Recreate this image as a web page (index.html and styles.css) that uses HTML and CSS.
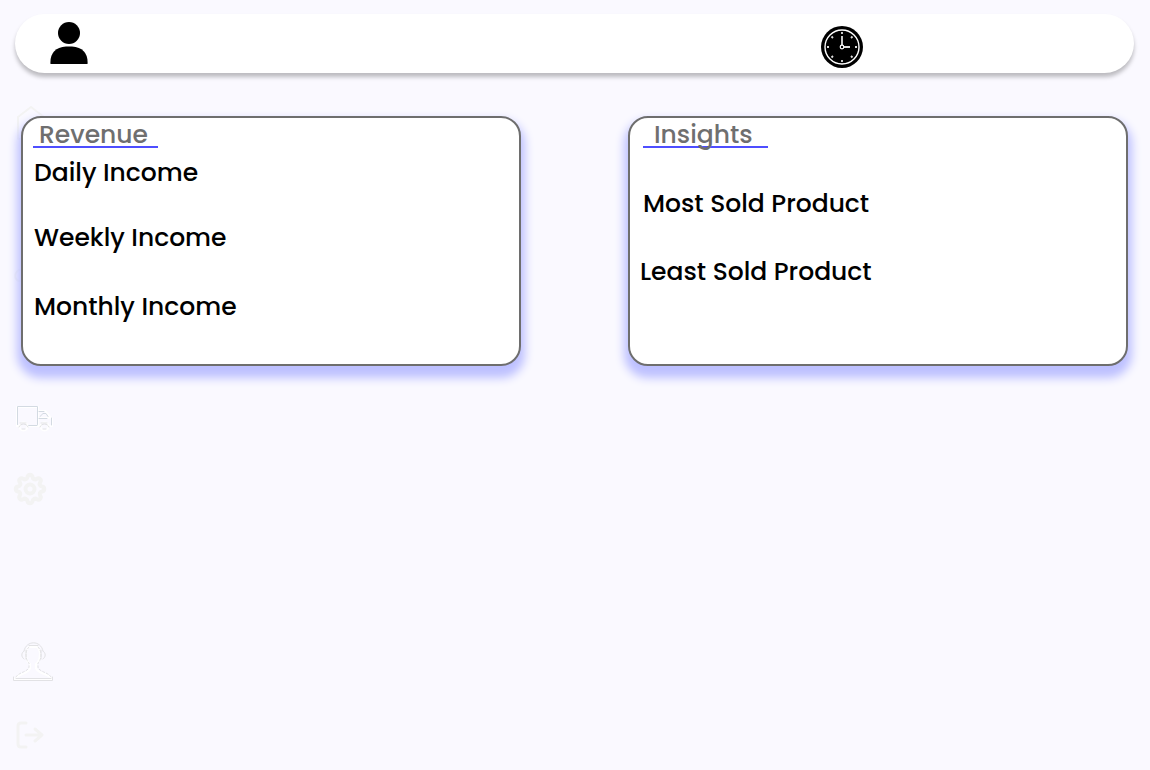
FILE: index.html
```html
<!DOCTYPE html>
<html lang="en">
<head>
<meta charset="utf-8">
<meta name="viewport" content="width=device-width, initial-scale=1">
<title>Dashboard</title>
<link rel="stylesheet" href="styles.css">
</head>
<body>
<nav class="sidebar" aria-label="Main">
  <a class="nav-link home" href="#home" aria-label="Home"><svg width="34" height="36" viewBox="0 0 34 36"><path d="M4 34V12L17 2l13 10v22z"/></svg></a>
  <a class="nav-link stock" href="#stock" aria-label="Stock"><svg width="32" height="24" viewBox="0 0 32 24"><path d="M5 1C0 4 0 10 5 12h20V1z"/></svg></a>
  <a class="nav-link delivery" href="#delivery" aria-label="Delivery"><svg width="40" height="26" viewBox="0 0 40 26"><path class="shine" d="M5 21H3V2h21v19H14M24 6h7l7 8v7h-2M26 21h-2M25 13h10"/><path class="steel" d="M3.500 19.500V1.500h20v18M13 20.500h10M25 6.500h5M26 11.500l3-3h3l2 3M25 13.500h8M37.500 13v7"/><circle class="shine" cx="9.500" cy="21.500" r="4"/><circle class="shine" cx="30.500" cy="21.500" r="4"/><path class="fine" d="M6 18h6M5 22c1-4 8-4 9 0M8 24h3M27 18h6M26 22c1-4 8-4 9 0M29 24h3"/></svg></a>
  <a class="nav-link settings" href="#settings" aria-label="Settings"><svg width="32" height="32" viewBox="0 0 32 32"><path class="bold" d="M13.500 4c.6-3 4.400-3 5 0 .4 2.200 2.300 3 4.200 1.800 2.500-1.700 5.200 1 3.500 3.500-1.200 1.900-.4 3.800 1.800 4.200 3 .6 3 4.400 0 5-2.200.4-3 2.300-1.800 4.200 1.700 2.500-1 5.200-3.500 3.500-1.900-1.200-3.800-.4-4.200 1.800-.6 3-4.400 3-5 0-.4-2.200-2.300-3-4.200-1.800-2.500 1.700-5.200-1-3.500-3.500C7 20.800 6.200 18.900 4 18.500c-3-.6-3-4.400 0-5 2.200-.4 3-2.300 1.800-4.200C4.100 6.800 6.800 4.100 9.300 5.800 11.200 7 13.100 6.200 13.500 4z"/><circle class="bold" cx="16" cy="16" r="4.500"/></svg></a>
  <a class="nav-link support" href="#support" aria-label="Support"><svg width="40" height="40" viewBox="0 0 40 40"><path class="shine" d="M1 37c2-5 14-5 15-11v-4c-5-4-5-14-1-17h8c4 3 4 13-1 17v4c1 6 14 6 16 11M1 37h37"/><path class="fine dots" d="M2 35c3-5 12-5 13-10v-4c-4-4-4-12 0-16M37 35c-3-5-12-5-13-10v-4c4-4 4-12 0-16"/><path class="fine" d="M-.5 35v3.500h39V35M2 36.500h35M10 9c2-11 17-11 19 0M15 3.500h9M10 9c-3 2-3 6 0 8M29 9c3 2 3 6 0 8M12 8v9M27 8v9"/></svg></a>
  <a class="nav-link logout" href="#logout" aria-label="Log out"><svg width="32" height="30" viewBox="0 0 32 30"><path class="bold" d="M12 3H7Q4 3 4 6v18q0 3 3 3h5M12 15h16M21 9l7 6-7 6"/></svg></a>
</nav>
<header class="topbar">
  <svg class="user" viewBox="0 0 38 44" role="img" aria-label="User"><circle cx="19" cy="12" r="11"/><path d="M.5 43q-1-16 15.500-17.500h6q16.500 1.500 15.500 17.500z"/></svg>
  <svg class="clock" viewBox="0 0 42 42" role="img" aria-label="Clock"><circle cx="21" cy="21" r="21"/><g fill="none" stroke="#fff"><circle cx="21" cy="21" r="17" stroke-width="1.400"/><path stroke="#ddd" stroke-width="1.800" d="M21 6v2M21 34v2M6 21h2M34 21h2M10.500 10.500l1.500 1.500M30 30l1.500 1.500M10.500 31.500l1.500-1.500M30 12l1.500-1.500"/><path stroke="#ddd" stroke-width="1.800" d="M21 19v-9M23 21h6"/><circle cx="21" cy="21" r="1.800" stroke-width="1.200"/></g></svg>
</header>
<main class="cards">
  <section class="card revenue">
    <h2 class="card-title">Revenue</h2>
    <p class="metric daily">Daily Income</p>
    <p class="metric weekly">Weekly Income</p>
    <p class="metric monthly">Monthly Income</p>
  </section>
  <section class="card insights">
    <h2 class="card-title">Insights</h2>
    <p class="metric most">Most Sold Product</p>
    <p class="metric least">Least Sold Product</p>
  </section>
</main>
</body>
</html>
```
FILE: styles.css
```css
* { box-sizing: border-box; }
body {
  margin: 0;
  min-height: 100vh;
  background: #faf9ff;
  color: #000;
  font-family: Poppins, Inter, "Open Sans", sans-serif;
}
/* The navigation rail sits underneath the cards. */
.sidebar {
  position: absolute;
  top: 105px;
  left: 14px;
  display: flex;
  flex-direction: column;
  align-items: flex-start;
}
.nav-link svg {
  display: block;
  overflow: visible;
  fill: none;
  stroke: #f3f3f3;
  stroke-width: 2;
  stroke-linecap: round;
  stroke-linejoin: round;
}
.nav-link .bold { stroke: #f3f3f3; stroke-width: 3; }
.settings .bold { stroke-width: 4; }
.nav-link .fine { stroke: #e2e2e5; stroke-width: 1; }
.nav-link .steel { stroke: #d3dae2; stroke-width: 1; }
.nav-link .shine { stroke: #fff; stroke-width: 2; }
.nav-link .dots { stroke-dasharray: 2 2; }
.stock { margin-top: 128px; }
.delivery { margin-top: 112px; }
.settings { margin-top: 42px; }
.support { margin-top: 137px; }
.logout { margin-top: 38px; }
.topbar {
  position: relative;
  display: flex;
  align-items: flex-start;
  justify-content: space-between;
  height: 59px;
  margin: 14px 16px 0 15px;
  padding: 7px 271px 0 35px;
  border-radius: 30px;
  background: #fff;
  box-shadow: 0 4px 4px rgba(0, 0, 0, 0.25);
}
.user { width: 38px; height: 44px; }
.clock { width: 42px; height: 42px; margin-top: 5px; }
.cards {
  position: relative;
  display: flex;
  justify-content: space-between;
  gap: 24px;
  margin: 43px 22px 24px 21px;
}
.card {
  flex: 0 1 500px;
  min-height: 250px;
  padding: 0 10px;
  border: 2px solid #6e6e6e;
  border-radius: 20px;
  background: #fff;
  box-shadow: 0 8px 10px 4px #bdc0ff;
}
.card-title {
  width: 125px;
  height: 30px;
  margin: 0;
  padding-left: 6px;
  border-bottom: 2px solid #4e4eff;
  color: #6f6f6f;
  font-size: 25px;
  font-weight: 500;
  line-height: 34px;
}
.insights .card-title { margin-left: 3px; padding-left: 11px; }
.metric {
  margin: 0 1px;
  font-size: 25px;
  font-weight: 500;
  line-height: 30px;
}
.daily { margin-top: 10px; }
.weekly { margin-top: 35px; }
.monthly { margin-top: 39px; }
.most { margin-top: 41px; margin-left: 3px; }
.least { margin-top: 38px; margin-left: 0; }
```
